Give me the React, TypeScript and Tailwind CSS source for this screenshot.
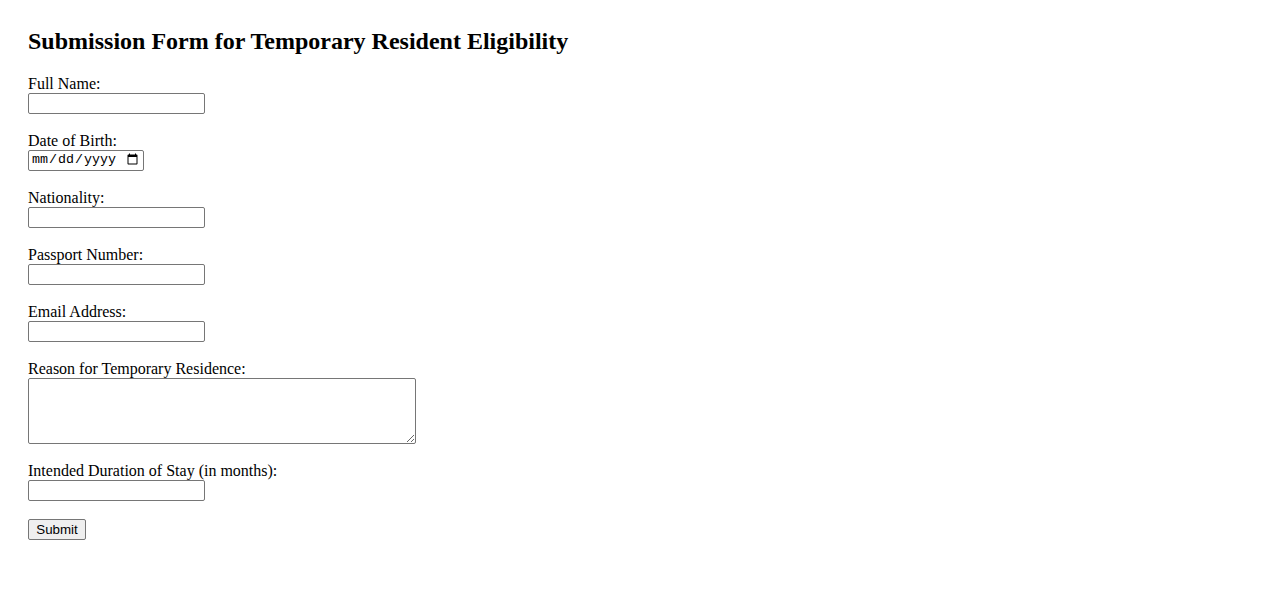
import React from "react";

const inputCls =
  "block h-[21px] w-[177px] border border-[#767676] rounded-[2px] bg-white px-[2px] py-[1px] text-[13.333px] text-black outline-none [font-family:'Liberation_Sans',Arial,sans-serif]";

function Field({ label, children }: { label: string; children: React.ReactNode }) {
  return (
    <div className="mb-[18px]">
      <label className="block text-[16px] leading-[18px]">{label}</label>
      {children}
    </div>
  );
}

export default function App() {
  return (
    <div className="min-h-[601px] bg-white pl-[28px] pt-[28px] text-black [font-family:'Liberation_Serif','Times_New_Roman',serif]">
      <h2 className="mb-[19px] text-[24px] font-bold leading-[27.6px]">
        Submission Form for Temporary Resident Eligibility
      </h2>
      <form onSubmit={(e) => e.preventDefault()}>
        <Field label="Full Name:">
          <input type="text" className={inputCls} />
        </Field>
        <Field label="Date of Birth:">
          <input
            type="date"
            className="block h-[21px] w-[116px] border border-[#767676] rounded-[2px] bg-white px-[2px] py-0 text-[13.333px] text-black outline-none [font-family:'Liberation_Mono',monospace]"
          />
        </Field>
        <Field label="Nationality:">
          <input type="text" className={inputCls} />
        </Field>
        <Field label="Passport Number:">
          <input type="text" className={inputCls} />
        </Field>
        <Field label="Email Address:">
          <input type="email" className={inputCls} />
        </Field>
        <Field label="Reason for Temporary Residence:">
          <textarea className="block h-[66px] w-[388px] resize border border-[#767676] rounded-[2px] bg-white px-[2px] py-[2px] text-[13.333px] outline-none [font-family:'Liberation_Mono',monospace]" />
        </Field>
        <Field label="Intended Duration of Stay (in months):">
          <input type="number" className={inputCls} />
        </Field>
        <button
          type="submit"
          className="block h-[21px] w-[58px] border border-[#767676] rounded-[2px] bg-[#efefef] px-[6px] text-[13.333px] leading-[19px] text-black [font-family:'Liberation_Sans',Arial,sans-serif]"
        >
          Submit
        </button>
      </form>
    </div>
  );
}
